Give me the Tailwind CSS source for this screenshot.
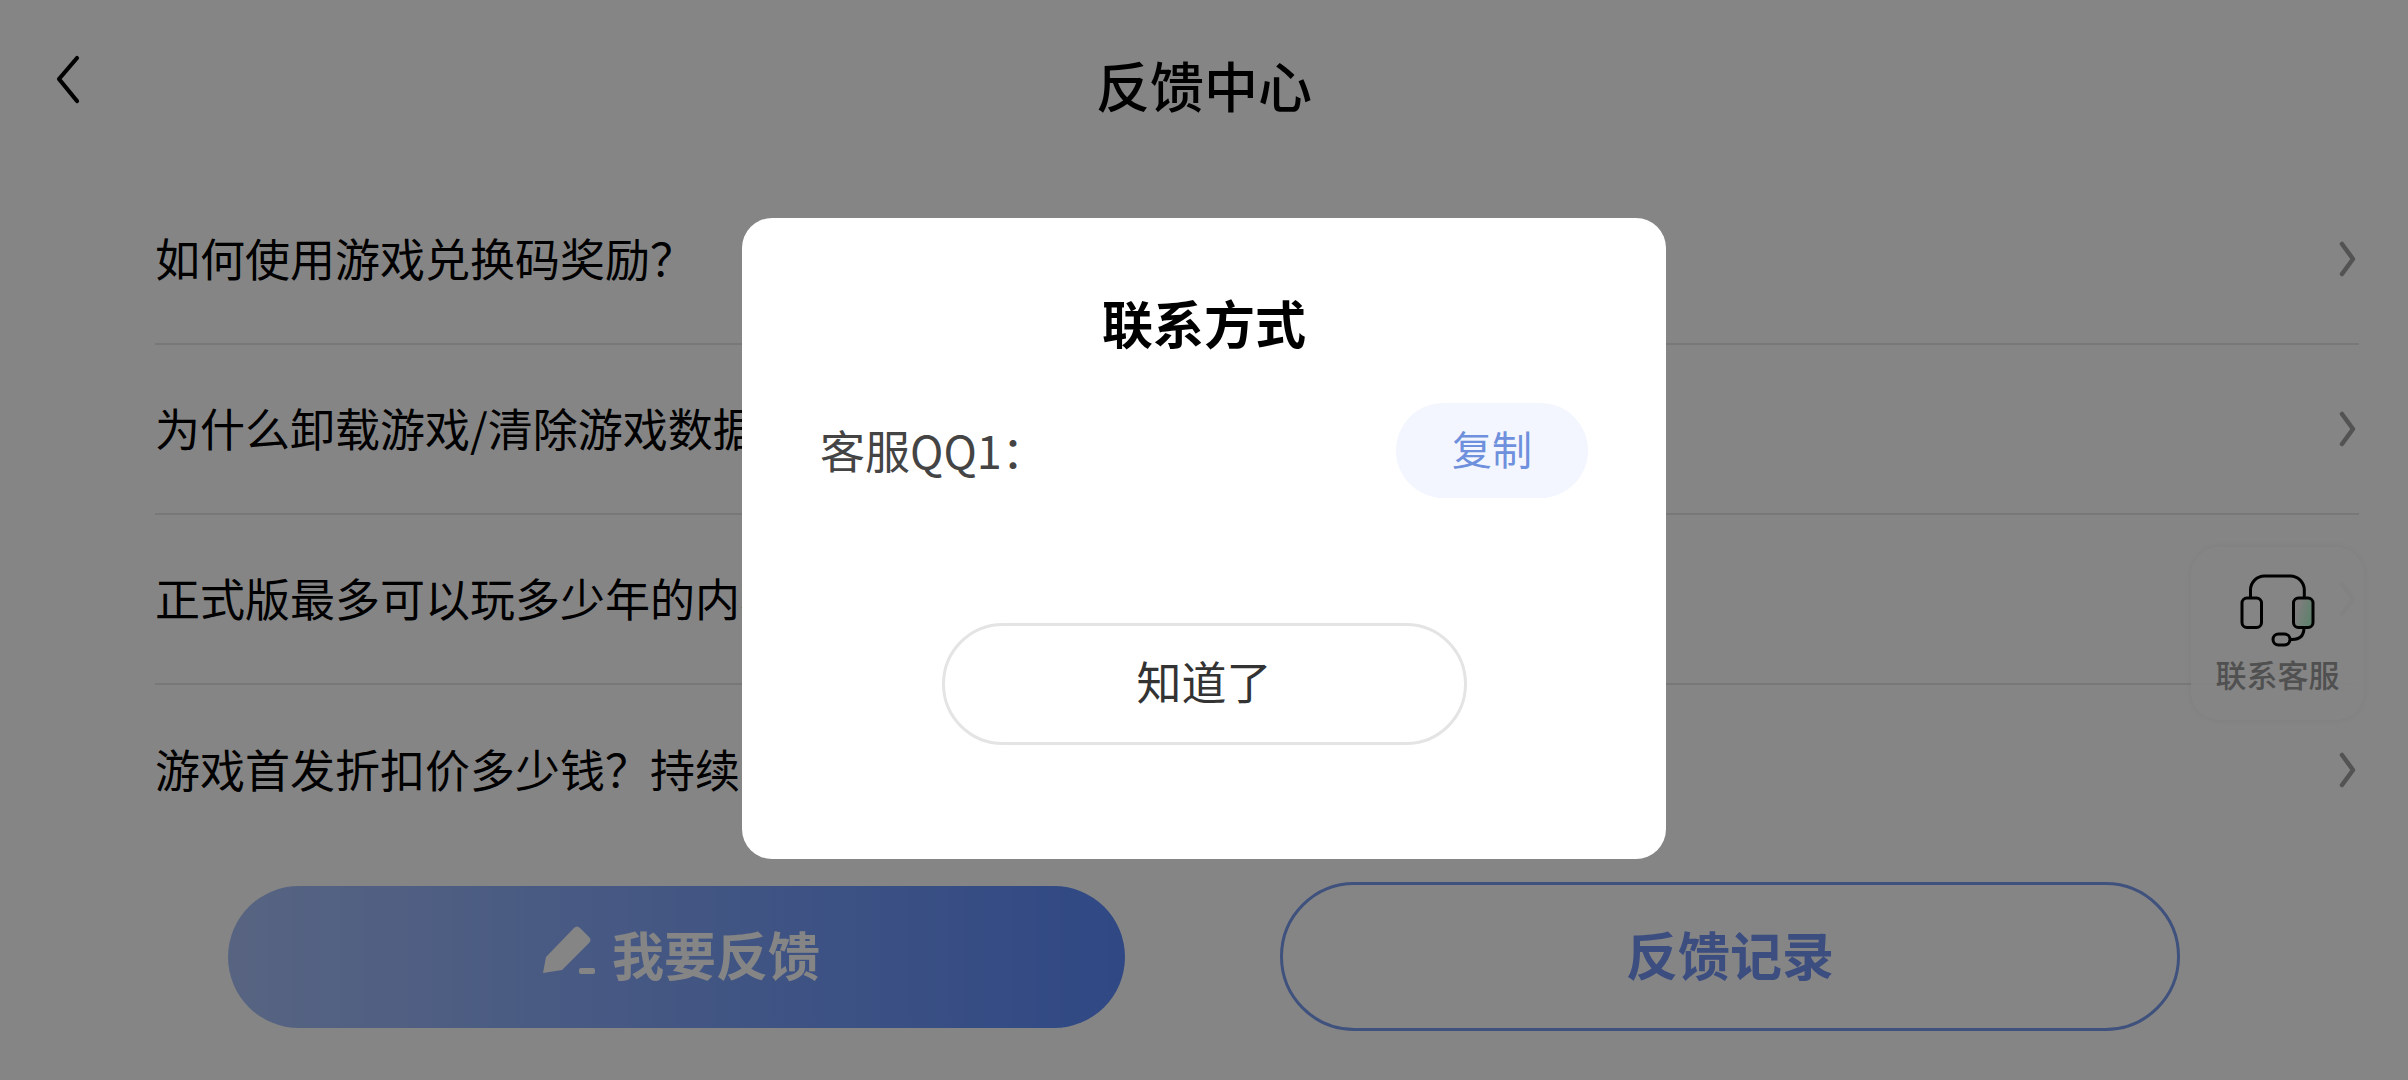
<!DOCTYPE html>
<html lang="zh-CN">
<head>
    <meta charset="UTF-8">
    <meta name="viewport" content="width=device-width, initial-scale=1.0">
    <title>反馈中心</title>
    <script src="https://cdn.jsdelivr.net/npm/@tailwindcss/browser@4"></script>
</head>
<body class="bg-white font-['Noto_Sans_CJK_SC','Noto_Sans',sans-serif]">
    <div class="relative w-[2408px] h-[1080px] overflow-hidden bg-white">

        <!-- Header -->
        <div class="grid grid-cols-[1fr_auto_1fr] items-center h-[175px]">
            <div class="pl-[54px] pb-[14px]">
                <svg class="w-[28px] h-[52px]" viewBox="0 0 28 52" fill="none" stroke="#000" stroke-width="4.2" stroke-linecap="round" stroke-linejoin="round"><path d="M23 3 5 24l18 22"/></svg>
            </div>
            <h1 class="text-[54px] leading-[70px] pb-[6px] font-medium text-black">反馈中心</h1>
            <div></div>
        </div>

        <!-- FAQ list -->
        <div class="pl-[155px] pr-[49px]">
            <div class="flex items-center justify-between h-[170px] border-b-2 border-[#e6e6e6]">
                <span class="text-[45px] leading-[60px] pb-[3px] text-black">如何使用游戏兑换码奖励？</span>
                <svg class="w-[18px] h-[36px] mr-[3px]" viewBox="0 0 18 36" fill="none" stroke="#a0a0a0" stroke-width="4.5" stroke-linecap="round" stroke-linejoin="round"><path d="M4 3l11 15L4 33"/></svg>
            </div>
            <div class="flex items-center justify-between h-[170px] border-b-2 border-[#e6e6e6]">
                <span class="text-[45px] leading-[60px] pb-[3px] text-black">为什么卸载游戏/清除游戏数据</span>
                <svg class="w-[18px] h-[36px] mr-[3px]" viewBox="0 0 18 36" fill="none" stroke="#a0a0a0" stroke-width="4.5" stroke-linecap="round" stroke-linejoin="round"><path d="M4 3l11 15L4 33"/></svg>
            </div>
            <div class="flex items-center justify-between h-[170px] border-b-2 border-[#e6e6e6]">
                <span class="text-[45px] leading-[60px] pb-[3px] text-black">正式版最多可以玩多少年的内容？</span>
                <svg class="w-[18px] h-[36px] mr-[3px]" viewBox="0 0 18 36" fill="none" stroke="#a0a0a0" stroke-width="4.5" stroke-linecap="round" stroke-linejoin="round"><path d="M4 3l11 15L4 33"/></svg>
            </div>
            <div class="flex items-center justify-between h-[170px]">
                <span class="text-[45px] leading-[60px] pb-[3px] text-black">游戏首发折扣价多少钱？持续多久？</span>
                <svg class="w-[18px] h-[36px] mr-[3px]" viewBox="0 0 18 36" fill="none" stroke="#a0a0a0" stroke-width="4.5" stroke-linecap="round" stroke-linejoin="round"><path d="M4 3l11 15L4 33"/></svg>
            </div>
        </div>

        <!-- Bottom buttons -->
        <div class="flex items-center gap-[155px] pl-[228px] pt-[27px]">
            <button class="flex items-center justify-center w-[897px] h-[142px] pl-[8px] pb-[5px] rounded-full bg-gradient-to-r from-[#a8c0f8] to-[#5c8bfe] text-white text-[52px] font-bold">
                <svg class="w-[56px] h-[54px] mr-[15px] mb-[10px]" viewBox="0 0 56 54" fill="#fff"><path d="M2 51 5 35 33 6Q36 3 39 6L48 15Q51 18 48 21L21 48Z"/><rect x="38" y="46" width="16" height="6" rx="2"/></svg>
                <span>我要反馈</span>
            </button>
            <button class="w-[900px] h-[149px] pb-[5px] rounded-full border-[3px] border-[#7a9bf0] text-[#7394f5] text-[52px] font-bold">反馈记录</button>
        </div>

        <!-- Floating service button -->
        <div class="absolute top-[547px] right-[44px] flex flex-col items-center w-[173px] h-[173px] pt-[26px] rounded-[28px] bg-white/95 shadow-[0_0_6px_rgba(0,0,0,0.06)]">
            <svg class="w-[80px] h-[76px]" viewBox="0 0 80 76" fill="none" stroke="#000" stroke-width="3">
                <defs>
                    <linearGradient id="ear" x1="0" x2="1" y1="0" y2="0.4">
                        <stop offset="0.3" stop-color="#f2f2f2"/>
                        <stop offset="1" stop-color="#b8f8d0"/>
                    </linearGradient>
                </defs>
                <path d="M12.5 25V17A14 14 0 0 1 26.5 3H52.3A14 14 0 0 1 66.3 17V25"/>
                <rect x="4" y="25" width="19.5" height="29.5" rx="5"/>
                <rect x="55.5" y="25" width="19.5" height="29.5" rx="5" fill="url(#ear)"/>
                <path d="M66 54.5Q66 66.5 54 66.5H52"/>
                <rect x="35" y="61" width="17" height="11" rx="5.5"/>
            </svg>
            <span class="mt-[4px] text-[31px] leading-[42px] font-medium text-[#999]">联系客服</span>
        </div>

        <!-- Overlay + dialog -->
        <div class="absolute inset-0 flex items-center justify-center pb-[3px] bg-black/[0.48]">
            <div class="flex flex-col w-[924px] h-[641px] pt-[74px] px-[78px] rounded-[30px] bg-white">
                <h2 class="text-center text-[51px] leading-[60px] font-bold text-black">联系方式</h2>
                <div class="flex items-center justify-between mt-[51px] h-[95px]">
                    <span class="text-[45px] leading-[60px] pb-[2px] text-[#444]">客服QQ1：</span>
                    <button class="w-[192px] h-[95px] pb-[5px] rounded-full bg-[#f3f6fe] text-[40px] text-[#6f90dc]">复制</button>
                </div>
                <button class="self-center w-[525px] h-[122px] mt-[125px] pb-[6px] rounded-full border-[3px] border-[#e4e4e4] text-[45px] text-[#333]">知道了</button>
            </div>
        </div>
    </div>
</body>
</html>
